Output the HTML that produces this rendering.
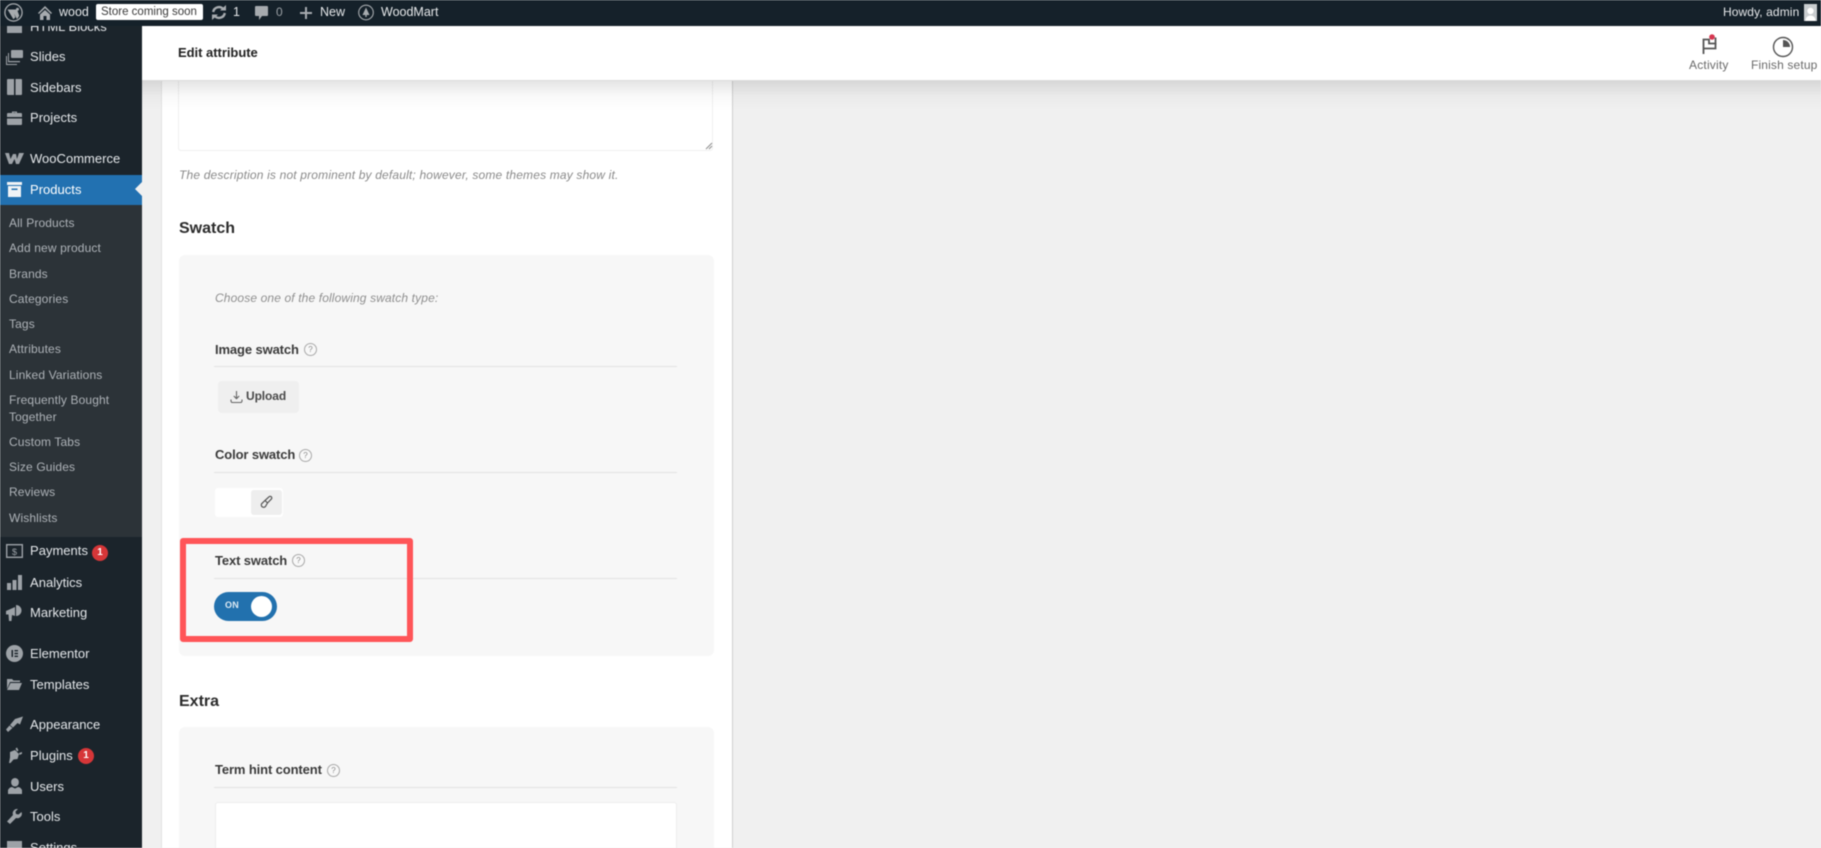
<!DOCTYPE html>
<html><head><meta charset="utf-8"><title>Edit attribute</title>
<style>
html,body{margin:0;padding:0;width:1821px;height:848px;overflow:hidden;background:#f0f0f0}
body{font-family:"Liberation Sans",sans-serif;position:relative;-webkit-font-smoothing:antialiased}
#w{position:absolute;left:0;top:0;width:1821px;height:848px;overflow:hidden;filter:blur(.5px)}
.a{position:absolute}
.t{position:absolute;white-space:nowrap;line-height:20px;height:20px}
.s{color:#e4e7ea;font-size:13px;letter-spacing:.02px;left:30px}
.u{color:#aeb3b8;font-size:12px;letter-spacing:.13px;left:9px}
.b{color:#e6e8ea;font-size:12.5px}
.h{color:#2b2b2b;font-size:16px;font-weight:bold;left:179px}
.l{color:#3a3a3a;font-size:13px;font-weight:bold;left:215px;letter-spacing:-.12px}
.ln{position:absolute;left:214px;width:463px;height:1px;background:#e3e3e3}
.q{position:absolute;width:11px;height:11px;border:1px solid #a9a9a9;border-radius:50%;color:#8a8a8a;font-size:8px;line-height:11px;text-align:center;background:#f8f8f8}
.ic{position:absolute;fill:#9da2a7}
.bd{position:absolute;width:16px;height:16px;border-radius:50%;background:#d63638;color:#fff;font-size:10px;font-weight:bold;line-height:16px;text-align:center}
</style></head><body><div id="w">

<!-- main panel -->
<div class="a" style="left:161px;top:0;width:570px;height:848px;background:#fff;border-left:1px solid #e2e2e2;border-right:1px solid #cfcfcf"></div>
<!-- textarea -->
<div class="a" style="left:178px;top:60px;width:535px;height:91px;background:#fff;border:1px solid #efefef;border-radius:3px;box-sizing:border-box"></div>
<svg class="a" style="left:705px;top:142px" width="8" height="8"><path d="M1 7L7 1M4 7L7 4" stroke="#8d8d8d" stroke-width="1"/></svg>
<!-- header shadow -->
<div class="a" style="left:142px;top:81px;width:1679px;height:30px;background:linear-gradient(rgba(0,0,0,.1),rgba(0,0,0,.025) 50%,rgba(0,0,0,0))"></div>

<div class="t" style="left:179px;top:165px;color:#8a8a8a;font-size:12px;font-style:italic;letter-spacing:.17px">The description is not prominent by default; however, some themes may show it.</div>

<div class="t h" style="top:219px">Swatch</div>
<div class="a" style="left:179px;top:255px;width:535px;height:401px;background:#f7f7f7;border-radius:6px"></div>
<div class="t" style="left:215px;top:288px;color:#8f8f8f;font-size:12px;font-style:italic;letter-spacing:.13px">Choose one of the following swatch type:</div>

<div class="t l" style="top:340px">Image swatch</div>
<div class="q" style="left:304px;top:343px">?</div>
<div class="ln" style="top:366px"></div>
<div class="a" style="left:218px;top:381px;width:81px;height:32px;background:#efefef;border-radius:4px"></div>
<svg class="a" style="left:230px;top:390px" width="13" height="14" fill="none" stroke="#666" stroke-width="1.1"><path d="M6.5 1V8.5M3.8 6L6.5 8.7L9.2 6M1 9.5V11a1.5 1.5 0 0 0 1.5 1.5h8A1.5 1.500 0 0 0 12 11V9.5"/></svg>
<div class="t" style="left:246px;top:386px;color:#4a4a4a;font-size:12px;font-weight:bold;letter-spacing:-.1px">Upload</div>

<div class="t l" style="top:445px">Color swatch</div>
<div class="q" style="left:299px;top:449px">?</div>
<div class="ln" style="top:472px"></div>
<div class="a" style="left:215px;top:488px;width:68px;height:29px;background:#fff;border-radius:3px"></div>
<div class="a" style="left:251px;top:490px;width:31px;height:25px;background:#eeeeee;border-radius:3px"></div>
<svg class="a" style="left:259px;top:495px" width="14" height="14" fill="none" stroke="#555" stroke-width="1.2"><path d="M6 5.500L10 1.800a1.600 1.600 0 0 1 2.300 2.300L8.500 8M6 5.500L8.500 8L7 10.500a2.400 2.400 0 0 1-3.500 1.500A2.300 2.300 0 0 1 2.600 8.800Z"/></svg>

<div class="t l" style="top:551px">Text swatch</div>
<div class="q" style="left:292px;top:554px">?</div>
<div class="ln" style="top:578px"></div>
<div class="a" style="left:214px;top:592px;width:63px;height:29px;border-radius:15px;background:#2271ae"></div>
<div class="a" style="left:251px;top:596px;width:21px;height:21px;border-radius:50%;background:#fff"></div>
<div class="t" style="left:225px;top:595px;color:#dfeaf3;font-size:9px;font-weight:bold;letter-spacing:.2px">ON</div>

<div class="a" style="left:180px;top:538px;width:233px;height:104px;box-sizing:border-box;border:6px solid #ff5558;border-radius:3px"></div>

<div class="t h" style="top:692px">Extra</div>
<div class="a" style="left:179px;top:727px;width:535px;height:130px;background:#f7f7f7;border-radius:6px"></div>
<div class="t l" style="top:760px">Term hint content</div>
<div class="q" style="left:327px;top:764px">?</div>
<div class="ln" style="top:787px"></div>
<div class="a" style="left:215px;top:802px;width:462px;height:60px;background:#fff;border:1px solid #ededed;box-sizing:border-box;border-radius:3px"></div>

<!-- header -->
<div class="a" style="left:142px;top:26px;width:1679px;height:55px;background:#fff;border-bottom:1px solid #dcdcdc;box-sizing:border-box"></div>
<div class="t" style="left:178px;top:43px;color:#222;font-size:13px;font-weight:bold;letter-spacing:-.03px">Edit attribute</div>
<svg class="a" style="left:1701px;top:33px" width="18" height="22" fill="none"><path d="M2.500 21V6.500H8V10.500H14.500V4.500" stroke="#555" stroke-width="1.800"/><path d="M2.500 15.500H14.500V10" stroke="#555" stroke-width="1.800"/><circle cx="11" cy="4" r="2.800" fill="#d63650"/></svg>
<div class="t" style="left:1689px;top:55px;color:#6a6a6a;font-size:12px;letter-spacing:.2px">Activity</div>
<svg class="a" style="left:1772px;top:36px" width="22" height="22" fill="none"><circle cx="11" cy="11" r="9.500" stroke="#555" stroke-width="1.400"/><path d="M11 11V4a7 7 0 0 1 7 7Z" fill="#555"/></svg>
<div class="t" style="left:1751px;top:55px;color:#6a6a6a;font-size:12px;letter-spacing:.15px">Finish setup</div>

<!-- sidebar -->
<div class="a" style="left:0;top:26px;width:142px;height:822px;background:#1b242b;overflow:hidden">
<div class="t" style="color:#e4e7ea;font-size:13px;left:30px;top:-9px">HTML Blocks</div>
<div class="a" style="left:7px;top:0;width:15px;height:7px;background:#9da2a7"></div>
</div>
<div class="a" style="left:0;top:175px;width:142px;height:30px;background:#2271b1"></div>
<div class="a" style="left:135px;top:182px;width:0;height:0;border:7px solid transparent;border-right-color:#f0f0f0;border-left:0"></div>
<div class="a" style="left:0;top:205px;width:142px;height:332px;background:#2c3338"></div>

<svg class="ic" style="left:6px;top:49px" width="17" height="16"><path d="M6 1h10a1 1 0 0 1 1 1v6a1 1 0 0 1-1 1H6a1 1 0 0 1-1-1V2a1 1 0 0 1 1-1Z"/><path d="M3 4v8h11v1.300H2V4Z M1 7v8h10v1H0V7Z"/></svg>
<div class="t s" style="top:47px">Slides</div>
<svg class="ic" style="left:7px;top:79px" width="15" height="16"><path d="M1 0h6v16H1a1 1 0 0 1-1-1V1a1 1 0 0 1 1-1ZM8.500 0H14a1 1 0 0 1 1 1v14a1 1 0 0 1-1 1H8.500Z"/></svg>
<div class="t s" style="top:78px">Sidebars</div>
<svg class="ic" style="left:7px;top:110px" width="15" height="15"><path d="M5 3V1.500h5V3h-1.200V2.600H6.200V3ZM1 3h13a1 1 0 0 1 1 1v3H0V4a1 1 0 0 1 1-1ZM0 8.500h15V14a1 1 0 0 1-1 1H1a1 1 0 0 1-1-1Z"/></svg>
<div class="t s" style="top:108px">Projects</div>
<svg class="ic" style="left:5px;top:153px" width="19" height="11"><path d="M0 0h4l1.500 6L8 1h3l1 5 2-6h5l-5 11h-3L9.500 6 7 11H4Z"/></svg>
<div class="t s" style="top:149px">WooCommerce</div>
<svg class="a" style="left:7px;top:182px" width="15" height="15" fill="#f0f3f6"><path d="M0 0h15v3H0ZM1 4h13v11H1ZM4.500 6.500v1.500h6V6.500Z" fill-rule="evenodd"/></svg>
<div class="t s" style="top:180px;color:#fff">Products</div>

<div class="t u" style="top:213px">All Products</div>
<div class="t u" style="top:238px">Add new product</div>
<div class="t u" style="top:264px">Brands</div>
<div class="t u" style="top:289px">Categories</div>
<div class="t u" style="top:314px">Tags</div>
<div class="t u" style="top:339px">Attributes</div>
<div class="t u" style="top:365px">Linked Variations</div>
<div class="t u" style="top:390px">Frequently Bought</div>
<div class="t u" style="top:407px">Together</div>
<div class="t u" style="top:432px">Custom Tabs</div>
<div class="t u" style="top:457px">Size Guides</div>
<div class="t u" style="top:482px">Reviews</div>
<div class="t u" style="top:508px">Wishlists</div>

<svg class="a" style="left:6px;top:544px" width="17" height="14" fill="none"><rect x=".7" y=".7" width="15.600" height="12.600" stroke="#9da2a7" stroke-width="1.400"/><text x="8.500" y="11" font-size="9" fill="#9da2a7" text-anchor="middle" font-family="Liberation Sans">$</text></svg>
<div class="t s" style="top:541px">Payments</div>
<div class="bd" style="left:92px;top:545px">1</div>
<svg class="ic" style="left:7px;top:575px" width="15" height="15"><path d="M0 8h4v7H0ZM5.500 5h4v10h-4ZM11 0h4v15h-4Z"/></svg>
<div class="t s" style="top:573px">Analytics</div>
<svg class="ic" style="left:6px;top:605px" width="17" height="17"><path d="M0 6L9 2v9L6 10l-.5 6H3L2.500 9.500H0ZM10 0a5.500 5.500 0 0 1 0 11Z"/></svg>
<div class="t s" style="top:603px">Marketing</div>
<svg class="ic" style="left:6px;top:645px" width="17" height="17"><path fill-rule="evenodd" d="M8.500 0a8.500 8.500 0 1 1 0 17a8.500 8.500 0 0 1 0-17ZM5.500 5v7h1.500V5ZM8.500 5v1.400h3.500V5ZM8.500 7.800v1.400h3.500V7.800ZM8.500 10.600V12h3.500v-1.400Z"/></svg>
<div class="t s" style="top:644px">Elementor</div>
<svg class="ic" style="left:7px;top:678px" width="15" height="12"><path d="M0 1h5l1.500 1.500H13V4H3L0 11ZM3.500 5H15l-3 7H0Z"/></svg>
<div class="t s" style="top:675px">Templates</div>
<svg class="ic" style="left:6px;top:716px" width="17" height="16"><path d="M9 3l8-2.500-3 8-2.500-1.500L7 11.500 4 9ZM3.500 9.500l3 2.500-4.500 4L0 13.500Z"/></svg>
<div class="t s" style="top:715px">Appearance</div>
<svg class="ic" style="left:7px;top:747px" width="15" height="16"><path d="M3 5L8 3l4 4-1.500 5-4 .5L3.500 16H2l1-5.500ZM8.500 1.500l1.500-1 1.500 3-1.500 1ZM12 6l3-1 .5 1.500-3 1.500Z"/></svg>
<div class="t s" style="top:746px">Plugins</div>
<div class="bd" style="left:78px;top:748px">1</div>
<svg class="ic" style="left:8px;top:778px" width="14" height="16"><path d="M7 0a3.800 3.800 0 0 1 3.800 4.200A3.800 3.800 0 0 1 7 8.500 3.800 3.800 0 0 1 3.200 4.200 3.800 3.800 0 0 1 7 0ZM0 12c1-2 2.500-3 4-3l3 1.500L10 9c1.500 0 3 1 4 3v4H0Z"/></svg>
<div class="t s" style="top:777px">Users</div>
<svg class="ic" style="left:7px;top:809px" width="15" height="15"><path d="M11 0l-2.500 2.500.5 2.500 2.500.5L14.500 3a4.500 4.500 0 0 1-5.500 6L3 15 0 12.500 6 6A4.500 4.500 0 0 1 11 0Z"/></svg>
<div class="t s" style="top:807px">Tools</div>
<svg class="ic" style="left:7px;top:841px" width="15" height="10"><path d="M0 0h15v10H0Z"/></svg>
<div class="t s" style="top:838px">Settings</div>

<!-- admin bar -->
<div class="a" style="left:0;top:0;width:1821px;height:26px;background:#15212a"></div>
<svg class="a" style="left:4px;top:3px" width="19" height="19"><circle cx="9.500" cy="9.500" r="8.600" fill="none" stroke="#a7abaf" stroke-width="1.300"/><path d="M3.500 6.500h6l-.6.700 2.500 7-2 2ZM8 6.500h6l-.7.700 2 5.500-2.300 3.500Z" fill="#a7abaf"/><circle cx="13.500" cy="6.300" r="1.500" fill="#a7abaf"/></svg>
<svg class="ic" style="left:38px;top:6px;fill:#a7abaf" width="14" height="14"><path d="M7 0l7 7-1 1-6-5.800L1 8 0 7ZM2 8.500L7 4l5 4.500V14H8.500v-4h-3v4H2Z"/></svg>
<div class="t b" style="left:59px;top:2px">wood</div>
<div class="a" style="left:96px;top:4px;width:107px;height:16px;background:#fff;border-radius:2px"></div>
<div class="t" style="left:101px;top:2px;color:#3a3a3a;font-size:11.500px;letter-spacing:0">Store coming soon</div>
<svg class="a" style="left:211px;top:5px" width="16" height="15" fill="none" stroke="#a7abaf" stroke-width="2.400"><path d="M2.200 7a5.800 5.800 0 0 1 10-3M13.800 8a5.800 5.800 0 0 1-10 3"/><path d="M9 5.500h6V0ZM7 9.500H1V15Z" fill="#a7abaf" stroke="none"/></svg>
<div class="t b" style="left:233px;top:2px">1</div>
<svg class="ic" style="left:255px;top:6px;fill:#a7abaf" width="13" height="14"><path d="M1 0h11a1 1 0 0 1 1 1v8a1 1 0 0 1-1 1H7l-3 4v-4H1a1 1 0 0 1-1-1V1a1 1 0 0 1 1-1Z"/></svg>
<div class="t" style="left:276px;top:2px;color:#9aa0a5;font-size:12px">0</div>
<svg class="ic" style="left:300px;top:7px;fill:#a7abaf" width="12" height="12"><path d="M5 0h2v5h5v2H7v5H5V7H0V5h5Z"/></svg>
<div class="t b" style="left:320px;top:2px">New</div>
<svg class="a" style="left:358px;top:4px" width="16" height="17" fill="none"><circle cx="8" cy="8.500" r="7.300" stroke="#a7abaf" stroke-width="1.100"/><path d="M8 3.500L11.500 11H8.700v2H7.300v-2H4.500Z" fill="#a7abaf"/></svg>
<div class="t b" style="left:381px;top:2px">WoodMart</div>
<div class="t b" style="left:1723px;top:2px;font-size:12px;letter-spacing:.1px">Howdy, admin</div>
<div class="a" style="left:1804px;top:4px;width:13px;height:17px;background:#c9cdd0"></div>
<svg class="a" style="left:1804px;top:4px" width="13" height="17" fill="#fff"><circle cx="6.500" cy="7" r="3.200"/><path d="M1.500 17c0-3.500 2-5.500 5-5.500s5 2 5 5.500Z"/></svg>
</div></body></html>
